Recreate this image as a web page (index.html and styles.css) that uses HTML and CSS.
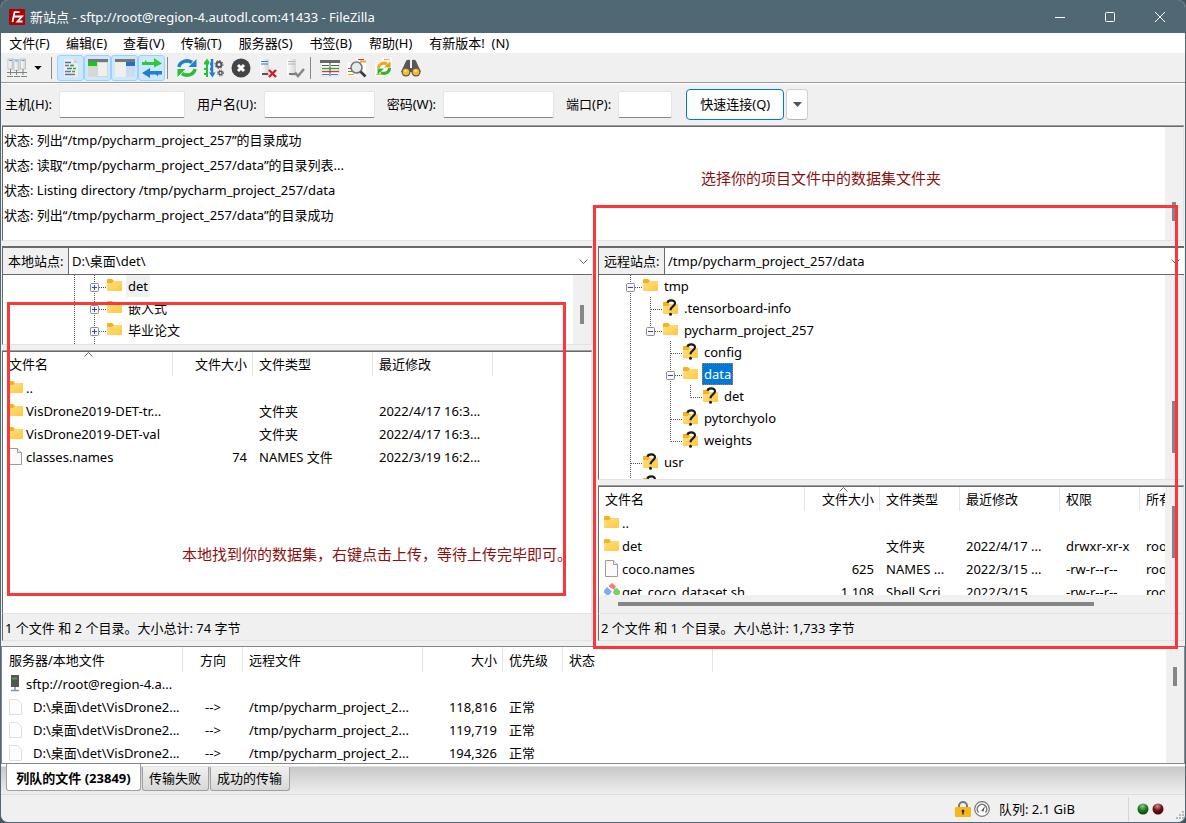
FILE: index.html
```html
<!DOCTYPE html>
<html lang="zh-CN">
<head>
<meta charset="utf-8">
<title>新站点 - FileZilla</title>
<link rel="stylesheet" href="styles.css">
</head>
<body>
<svg class="defs" aria-hidden="true">
  <defs>
    <linearGradient id="gold" x1="0" y1="0" x2="1" y2="1"><stop offset="0" stop-color="#ffe08a"/><stop offset="1" stop-color="#ffc83a"/></linearGradient>
    <radialGradient id="green" cx=".45" cy=".25" r=".8"><stop offset="0" stop-color="#8fc98f"/><stop offset=".5" stop-color="#1d7a1d"/><stop offset="1" stop-color="#003c00"/></radialGradient>
    <radialGradient id="maroon" cx=".45" cy=".25" r=".8"><stop offset="0" stop-color="#c98f8f"/><stop offset=".5" stop-color="#6e1414"/><stop offset="1" stop-color="#3a0000"/></radialGradient>
    <linearGradient id="tower" x1="0" y1="0" x2="1" y2="0"><stop offset="0" stop-color="#fff"/><stop offset="1" stop-color="#d4d4d4"/></linearGradient>
  </defs>
  <symbol id="folder" viewBox="0 0 16 18"><path d="M0 3q0-1 1-1h4l2 2h8v3H0z" fill="#f5b21c"/><path d="M0 6h5l2-2h7q1 0 1 1v8q0 1-1 1H1q-1 0-1-1z" fill="url(#gold)"/></symbol>
  <symbol id="unknown" viewBox="0 0 16 18"><path d="M0 3h5l2 2h8v3H0z" fill="#f5b21c"/><path d="M0 7h5l2-2h8v10H0z" fill="url(#gold)"/><path d="M4.500 3.800C5 1 12 .2 12 4.300c0 3-4.500 3.200-4.500 7" fill="none" stroke="#1c1a14" stroke-width="2.200"/><circle cx="7.500" cy="15.200" r="1.500" fill="#1c1a14"/></symbol>
  <symbol id="page" viewBox="0 0 16 18"><path d="M1.500 .5h8l4 4v12h-12z" fill="#fafafa" stroke="#9c9c9c"/><path d="M9.500 .5v4h4" fill="#eee" stroke="#9c9c9c"/></symbol>
  <symbol id="pale" viewBox="0 0 16 18"><path d="M1.500 1.500h8l4 4v11h-12z" fill="#fdfdfd" stroke="#dedede"/></symbol>
  <symbol id="git" viewBox="0 0 16 18"><path d="M4 3.500L8 0l4 3.500-2 3z" fill="#f77"/><path d="M-1 8.500l4-4.500 5 4.500-4 5z" fill="#79aef5"/><path d="M10 6l3-1 4 4-4 5-4-4z" fill="#7fd05f"/><path d="M4 3l5 6" stroke="#fff"/></symbol>
  <symbol id="server" viewBox="0 0 16 18"><path d="M3 0h8v12H3z" fill="#555"/><path d="M4 2.500h5v2H4z" fill="#3ea43e"/><path d="M7 12v3M3 15.500h8" stroke="#7c9aa8" stroke-width="1.500"/></symbol>
  <symbol id="gv" viewBox="0 0 20 22"><path d="M10.500 0v22" class="dots"/></symbol>
  <symbol id="gt" viewBox="0 0 20 22"><path d="M10.500 0v22M11 12.500h11" class="dots"/></symbol>
  <symbol id="gl" viewBox="0 0 20 22"><path d="M10.500 0v12.500M11 12.500h11" class="dots"/></symbol>
  <symbol id="box" viewBox="0 0 20 22"><rect x="6.500" y="8.500" width="8" height="8" rx="1" fill="#f7f7f7" stroke="#8c8c8c"/><path d="M8 12.500h5" stroke="#2f4b99"/></symbol>
  <symbol id="gm" viewBox="0 0 20 22"><path d="M10.500 0v22M11 12.500h11" class="dots"/><use href="#box"/></symbol>
  <symbol id="gme" viewBox="0 0 20 22"><path d="M10.500 0v12M11 12.500h11" class="dots"/><use href="#box"/></symbol>
  <symbol id="gp" viewBox="0 0 20 22"><path d="M10.500 0v22M11 12.500h11" class="dots"/><use href="#box"/><path d="M10.500 10v5" stroke="#2f4b99"/></symbol>
  <symbol id="tick" viewBox="0 0 9 5"><path d="M.5 4.500l4-4 4 4" fill="none" stroke="#666"/></symbol>
  <symbol id="caret" viewBox="0 0 9 5"><path d="M0 0h9L4.500 5z" fill="currentColor"/></symbol>
</svg>

<div class="window">
  <header class="titlebar">
    <svg class="app-icon" viewBox="0 0 16 16"><rect width="16" height="16" rx="1" fill="#b30000"/><path d="M3.500 13L5.500 3.200H10.500M4.500 7.500h4M8 7.500h5L8.500 12.500h5" fill="none" stroke="#fff" stroke-width="1.800"/></svg>
    <h1 class="title">新站点 - sftp://root@region-4.autodl.com:41433 - FileZilla</h1>
    <button class="win-btn" aria-label="最小化"><svg viewBox="0 0 10 10"><path d="M0 5.500h10"/></svg></button>
    <button class="win-btn" aria-label="最大化"><svg viewBox="0 0 10 10"><rect x=".5" y=".5" width="9" height="9" rx="1"/></svg></button>
    <button class="win-btn" aria-label="关闭"><svg viewBox="0 0 10 10"><path d="M0 0l10 10M10 0L0 10"/></svg></button>
  </header>

  <nav class="menu">
    <button>文件(F)</button><button>编辑(E)</button><button>查看(V)</button><button>传输(T)</button><button>服务器(S)</button><button>书签(B)</button><button>帮助(H)</button><button>有新版本!&nbsp; (N)</button>
  </nav>

  <div class="toolbar">
    <button class="tool" aria-label="站点管理器"><svg viewBox="0 0 20 20"><g fill="url(#tower)" stroke="#a9b3bd" stroke-width=".7"><rect x="1" y="1" width="5" height="10"/><rect x="7" y="1.500" width="5" height="11"/><rect x="13.500" y="1" width="5" height="10"/></g><path d="M2 2.500h3M8 3h3M14.500 2.500h3" stroke="#5b9be0"/><path d="M3.500 11v6M9.500 12v5M16 11v6M0 14.500h20M0 18.500h6M7 18.500h6M14 18.500h6" stroke="#7d837d" fill="none"/></svg></button>
    <button class="tool-drop" aria-label="站点列表"><svg viewBox="0 0 9 5"><use href="#caret"/></svg></button>
    <span class="sep"></span>
    <button class="tool on" aria-label="消息日志"><svg viewBox="0 0 20 20"><path d="M3 1h10l4 4v14H3z" fill="#ededed"/><path d="M13 1v4h4" fill="#cfcfcf"/><path d="M4 4.500h6M6 10.500h5M4 16.500h5" stroke="#3d77c2" stroke-width="1.500"/><path d="M4 7.500h4M10 7.500h3M4 13.500h6M9 16.500h5" stroke="#777" stroke-width="1.500"/><path d="M12 10.500h3M11 13.500h3M9 7.500h3" stroke="#2fae2f" stroke-width="1.500"/></svg></button>
    <button class="tool on" aria-label="本地目录树"><svg viewBox="0 0 20 20"><path d="M0 2h20v17H0z" fill="#d6d6d2"/><path d="M10 5h9v13h-9z" fill="#efefeb"/><path d="M0 1h20v3H0z" fill="#777"/><path d="M0 4h9v4H0z" fill="#18c818"/></svg></button>
    <button class="tool on" aria-label="远程目录树"><svg viewBox="0 0 20 20"><path d="M0 2h20v17H0z" fill="#efefeb"/><path d="M11 5h9v14h-9z" fill="#cddcf0"/><path d="M0 1h20v3H0z" fill="#777"/><path d="M11 4h9v4h-9z" fill="#1d74d0"/></svg></button>
    <button class="tool on" aria-label="传输队列"><svg viewBox="0 0 20 20"><path d="M0 4h3V2l2 2h7V0l8 5.500-8 4V7H0z" fill="#2fcb34"/><path d="M20 13H8v-3l-8 5 8 5v-3.500h6l2 2v-2h4z" fill="#2080d0"/></svg></button>
    <span class="sep"></span>
    <button class="tool" aria-label="刷新"><svg viewBox="0 0 20 20"><path d="M2 9A8 7 0 0 1 15 4.500" fill="none" stroke="#2080d0" stroke-width="3.600"/><path d="M19.500 1v8h-8z" fill="#2080d0"/><path d="M18 11A8 7 0 0 1 5 15.500" fill="none" stroke="#28c23a" stroke-width="3.600"/><path d="M.5 19v-8h8z" fill="#28c23a"/></svg></button>
    <button class="tool" aria-label="处理队列"><svg viewBox="0 0 20 20"><path d="M3 3v16M0 5.500h5M0 11h3M0 16h3" stroke="#28c23a" stroke-width="2"/><path d="M0 5l3-4.500L6 5z" fill="#28c23a"/><path d="M8 1v15M6 6h2M6 11h2" stroke="#2080d0" stroke-width="2.500"/><path d="M5 14.500l3.500 5 3-5z" fill="#2080d0"/><g fill="none" stroke="#555"><circle cx="15" cy="6.500" r="2.500" stroke-width="2"/><circle cx="15" cy="6.500" r="4" stroke-dasharray="1.500 1.600"/><circle cx="16.500" cy="15" r="1.700" stroke-width="1.500"/><circle cx="16.500" cy="15" r="3" stroke-dasharray="1.200 1.200"/></g></svg></button>
    <button class="tool" aria-label="取消"><svg viewBox="0 0 20 20"><circle cx="10" cy="10" r="9.500" fill="#424446"/><path d="M7 7l6 6M13 7l-6 6" stroke="#fff" stroke-width="3"/></svg></button>
    <button class="tool" aria-label="断开连接"><svg viewBox="0 0 20 20"><path d="M2 1h9v17H2z" fill="url(#tower)"/><path d="M3 3.500h7M3 6h7" stroke="#2f7fd4"/><path d="M4 16h6" stroke="#555" stroke-width="2"/><path d="M11 12l7 7M18 12l-7 7" stroke="#c8202c" stroke-width="2.400"/></svg></button>
    <button class="tool" aria-label="重新连接"><svg viewBox="0 0 20 20"><path d="M2 1h9v17H2z" fill="url(#tower)"/><path d="M3 3.500h7M3 6h7" stroke="#b4b4b4"/><path d="M4 16h6" stroke="#777" stroke-width="2"/><path d="M10 14.500l3 3.500 6-7" fill="none" stroke="#858585" stroke-width="2.500"/></svg></button>
    <span class="sep"></span>
    <button class="tool" aria-label="过滤器"><svg viewBox="0 0 20 20"><path d="M1 3h18v15H1z" fill="#fff" stroke="#ddd"/><path d="M0 2h20v3H0z" fill="#686868"/><path d="M2 7.500h7M11 7.500h8" stroke="#555"/><path d="M2 10.500h17" stroke="#28b030" stroke-width="1.500"/><path d="M2 13.500h17" stroke="#d43b3b" stroke-width="1.500"/><path d="M2 16.500h7M11 16.500h7" stroke="#2f7fd4"/><path d="M10 4v14" stroke="#555"/></svg></button>
    <button class="tool" aria-label="目录比较"><svg viewBox="0 0 20 20"><path d="M9 0h10v15H9z" fill="#fff"/><path d="M11 1.500h6" stroke="#d33"/><path d="M13 3.500h6" stroke="#e8a21c" stroke-width="2"/><path d="M0 5h9v13H0z" fill="#fff"/><path d="M1 10.500h4" stroke="#d33"/><path d="M1 13.500h5" stroke="#2faa2f"/><path d="M1 16.500h6" stroke="#e8a21c"/><circle cx="9.500" cy="9.500" r="5.500" fill="#e7eaeb" stroke="#777" stroke-width="1.600"/><path d="M13.500 13.500l5 5" stroke="#3c3c3c" stroke-width="2.600"/></svg></button>
    <button class="tool" aria-label="同步浏览"><svg viewBox="0 0 20 20"><path d="M8 0h10v13H8zM1 5h9v13H1z" fill="#fff"/><path d="M10 1.500h6M12 16.500H2" stroke="#e8b04c"/><path d="M4.500 10A5.500 5 0 0 1 13 6" fill="none" stroke="#f0a818" stroke-width="3"/><path d="M16.500 3v6.500H10z" fill="#e99a10"/><path d="M15.500 10A5.500 5 0 0 1 7 14.500" fill="none" stroke="#35b52f" stroke-width="3"/><path d="M3.500 17v-6.500H10z" fill="#35b52f"/></svg></button>
    <button class="tool" aria-label="查找文件"><svg viewBox="0 0 20 20"><path d="M0 14L5 3q1-2 4-1v8h2V2q3-1 4 1l5 11z" fill="#57585a"/><circle cx="5" cy="14" r="4.500" fill="#57585a"/><circle cx="15" cy="14" r="4.500" fill="#57585a"/><circle cx="5" cy="14" r="3.300" fill="#fdb813"/><circle cx="15" cy="14" r="3.300" fill="#fdb813"/><circle cx="4.500" cy="13" r="1.200" fill="#fff0b0"/><circle cx="14.500" cy="13" r="1.200" fill="#fff0b0"/></svg></button>
  </div>

  <form class="quick" onsubmit="return false">
    <label for="host">主机(H):</label><input id="host" class="w-host" type="text">
    <label for="user">用户名(U):</label><input id="user" class="w-user" type="text">
    <label for="pass">密码(W):</label><input id="pass" class="w-user" type="password">
    <label for="port">端口(P):</label><input id="port" class="w-port" type="text">
    <button class="connect">快速连接(Q)</button>
    <button class="history" aria-label="历史连接"><svg viewBox="0 0 9 5"><use href="#caret"/></svg></button>
  </form>

  <section class="log sunken">
    <div class="log-lines">
      <p>状态: 列出“/tmp/pycharm_project_257”的目录成功</p>
      <p>状态: 读取“/tmp/pycharm_project_257/data”的目录列表...</p>
      <p>状态: Listing directory /tmp/pycharm_project_257/data</p>
      <p>状态: 列出“/tmp/pycharm_project_257/data”的目录成功</p>
    </div>
    <div class="vbar at-log"><i></i></div>
  </section>

  <main class="panes">
    <section class="pane">
      <div class="site"><label for="local">本地站点:</label><select id="local"><option>D:\桌面\det\</option></select><svg class="chev" viewBox="0 0 9 5"><use href="#tick"/></svg></div>
      <div class="tree-wrap local-tree">
        <ul class="tree">
          <li><svg class="g"><use href="#gv"/></svg><svg class="g"><use href="#gp"/></svg><svg class="ic"><use href="#folder"/></svg><span class="grey">det</span></li>
          <li><svg class="g"><use href="#gv"/></svg><svg class="g"><use href="#gp"/></svg><svg class="ic"><use href="#folder"/></svg><span>嵌入式</span></li>
          <li><svg class="g"><use href="#gv"/></svg><svg class="g"><use href="#gp"/></svg><svg class="ic"><use href="#folder"/></svg><span>毕业论文</span></li>
          <li><svg class="g"><use href="#gv"/></svg><svg class="g"><use href="#gv"/></svg></li>
        </ul>
        <div class="vbar at-local"><i></i></div>
      </div>
      <div class="files sunken">
        <div class="clip">
          <table class="local-table">
            <colgroup><col class="c170"><col class="c80"><col class="c120"><col class="c120"></colgroup>
            <thead><tr><th>文件名<svg class="sort"><use href="#tick"/></svg></th><th class="r">文件大小</th><th>文件类型</th><th>最近修改</th></tr></thead>
            <tbody>
              <tr><td class="n"><svg class="fi"><use href="#folder"/></svg>..</td><td></td><td></td><td></td></tr>
              <tr><td class="n"><svg class="fi"><use href="#folder"/></svg>VisDrone2019-DET-tr...</td><td></td><td>文件夹</td><td>2022/4/17 16:3...</td></tr>
              <tr><td class="n"><svg class="fi"><use href="#folder"/></svg>VisDrone2019-DET-val</td><td></td><td>文件夹</td><td>2022/4/17 16:3...</td></tr>
              <tr><td class="n"><svg class="fi"><use href="#page"/></svg>classes.names</td><td class="r">74</td><td>NAMES 文件</td><td>2022/3/19 16:2...</td></tr>
            </tbody>
          </table>
        </div>
      </div>
      <div class="pane-status">1 个文件 和 2 个目录。大小总计: 74 字节</div>
    </section>

    <section class="pane">
      <div class="site"><label for="remote">远程站点:</label><select id="remote"><option>/tmp/pycharm_project_257/data</option></select><svg class="chev" viewBox="0 0 9 5"><use href="#tick"/></svg></div>
      <div class="tree-wrap remote-tree">
        <ul class="tree">
          <li><svg class="g"><use href="#gm"/></svg><svg class="ic"><use href="#folder"/></svg><span>tmp</span></li>
          <li><svg class="g"><use href="#gv"/></svg><svg class="g"><use href="#gt"/></svg><svg class="ic"><use href="#unknown"/></svg><span>.tensorboard-info</span></li>
          <li><svg class="g"><use href="#gv"/></svg><svg class="g"><use href="#gme"/></svg><svg class="ic"><use href="#folder"/></svg><span>pycharm_project_257</span></li>
          <li><svg class="g"><use href="#gv"/></svg><svg class="g"></svg><svg class="g"><use href="#gt"/></svg><svg class="ic"><use href="#unknown"/></svg><span>config</span></li>
          <li><svg class="g"><use href="#gv"/></svg><svg class="g"></svg><svg class="g"><use href="#gm"/></svg><svg class="ic"><use href="#folder"/></svg><span class="picked">data</span></li>
          <li><svg class="g"><use href="#gv"/></svg><svg class="g"></svg><svg class="g"><use href="#gv"/></svg><svg class="g"><use href="#gl"/></svg><svg class="ic"><use href="#unknown"/></svg><span>det</span></li>
          <li><svg class="g"><use href="#gv"/></svg><svg class="g"></svg><svg class="g"><use href="#gt"/></svg><svg class="ic"><use href="#unknown"/></svg><span>pytorchyolo</span></li>
          <li><svg class="g"><use href="#gv"/></svg><svg class="g"></svg><svg class="g"><use href="#gl"/></svg><svg class="ic"><use href="#unknown"/></svg><span>weights</span></li>
          <li><svg class="g"><use href="#gt"/></svg><svg class="ic"><use href="#unknown"/></svg><span>usr</span></li>
          <li><svg class="g"><use href="#gv"/></svg><svg class="ic"><use href="#unknown"/></svg></li>
        </ul>
        <div class="vbar at-remote"><i></i></div>
      </div>
      <div class="files sunken">
        <div class="clip">
          <table class="remote-table">
            <colgroup><col class="c206"><col class="c75"><col class="c80"><col class="c100"><col class="c80"><col class="c80"></colgroup>
            <thead><tr><th>文件名</th><th class="r">文件大小<svg class="sort"><use href="#tick"/></svg></th><th>文件类型</th><th>最近修改</th><th>权限</th><th>所有者</th></tr></thead>
            <tbody>
              <tr><td class="n"><svg class="fi"><use href="#folder"/></svg>..</td><td></td><td></td><td></td><td></td><td></td></tr>
              <tr><td class="n"><svg class="fi"><use href="#folder"/></svg>det</td><td></td><td>文件夹</td><td>2022/4/17 ...</td><td>drwxr-xr-x</td><td>root</td></tr>
              <tr><td class="n"><svg class="fi"><use href="#page"/></svg>coco.names</td><td class="r">625</td><td>NAMES ...</td><td>2022/3/15 ...</td><td>-rw-r--r--</td><td>root</td></tr>
              <tr><td class="n"><svg class="fi"><use href="#git"/></svg>get_coco_dataset.sh</td><td class="r">1,108</td><td>Shell Scri...</td><td>2022/3/15 ...</td><td>-rw-r--r--</td><td>root</td></tr>
            </tbody>
          </table>
        </div>
        <div class="vbar at-files"><i></i></div>
        <div class="hbar"><i></i></div>
      </div>
      <div class="pane-status">2 个文件 和 1 个目录。大小总计: 1,733 字节</div>
    </section>
  </main>

  <section class="queue">
    <div class="clip">
      <table class="queue-table">
        <colgroup><col class="c180"><col class="c60"><col class="c180"><col class="c80"><col class="c60"><col class="c150"></colgroup>
        <thead><tr><th>服务器/本地文件</th><th class="m">方向</th><th>远程文件</th><th class="r">大小</th><th>优先级</th><th>状态</th></tr></thead>
        <tbody>
          <tr><td class="n"><svg class="fi"><use href="#server"/></svg>sftp://root@region-4.a...</td><td></td><td></td><td></td><td></td><td></td></tr>
          <tr><td class="n deep"><svg class="fi"><use href="#pale"/></svg>D:\桌面\det\VisDrone2...</td><td class="m">--&gt;</td><td>/tmp/pycharm_project_2...</td><td class="r">118,816</td><td>正常</td><td></td></tr>
          <tr><td class="n deep"><svg class="fi"><use href="#pale"/></svg>D:\桌面\det\VisDrone2...</td><td class="m">--&gt;</td><td>/tmp/pycharm_project_2...</td><td class="r">119,719</td><td>正常</td><td></td></tr>
          <tr><td class="n deep"><svg class="fi"><use href="#pale"/></svg>D:\桌面\det\VisDrone2...</td><td class="m">--&gt;</td><td>/tmp/pycharm_project_2...</td><td class="r">194,326</td><td>正常</td><td></td></tr>
        </tbody>
      </table>
    </div>
    <div class="vbar at-queue"><i></i></div>
  </section>

  <div class="tabs" role="tablist">
    <button class="tab active" role="tab" aria-selected="true">列队的文件 (23849)</button><button class="tab" role="tab">传输失败</button><button class="tab" role="tab">成功的传输</button>
  </div>

  <footer class="statusbar">
    <svg class="st" viewBox="0 0 16 16"><path d="M4 8V5a4 4 0 0 1 8 0v3" fill="none" stroke="#777" stroke-width="2"/><rect y="6" width="16" height="10" rx="1" fill="#f9b717"/><circle cx="8" cy="10" r="1.500" fill="#333"/><path d="M8 10v3.500" stroke="#333" stroke-width="1.500"/></svg>
    <svg class="st" viewBox="0 0 16 16"><circle cx="8" cy="8" r="7.300" fill="#fff" stroke="#777" stroke-width="1.200"/><path d="M4.500 11.500a4.800 4.800 0 1 1 7 0" fill="none" stroke="#777" stroke-width="1.600"/><path d="M7 10l4-5-1.500 5.500z" fill="#555"/></svg>
    <span class="queue-size">队列: 2.1 GiB</span>
    <div class="lights">
      <svg viewBox="0 0 12 12"><circle cx="6" cy="6" r="5.500" fill="url(#green)"/></svg>
      <svg viewBox="0 0 12 12"><circle cx="6" cy="6" r="5.500" fill="url(#maroon)"/></svg>
    </div>
    <svg class="grip" viewBox="0 0 9 9"><path d="M6 0h2v2H6zM3 3h2v2H3zM6 3h2v2H6zM0 6h2v2H0zM3 6h2v2H3zM6 6h2v2H6z" fill="#b8b8b8"/></svg>
  </footer>

  <div class="mark mark-local"></div>
  <div class="mark mark-remote"></div>
  <p class="note note-local">本地找到你的数据集，右键点击上传，等待上传完毕即可。</p>
  <p class="note note-remote">选择你的项目文件中的数据集文件夹</p>
</div>
</body>
</html>
```

FILE: styles.css
```css
* { box-sizing: border-box; }
body { margin: 0; background: #43545f; font: 13px/20px "Noto Sans", "Noto Sans CJK SC", sans-serif; color: #000; }
button, input, select { font: inherit; color: inherit; margin: 0; padding: 0; border: 0; background: none; border-radius: 0; }
p, h1, ul { margin: 0; padding: 0; list-style: none; }
svg { display: block; flex: none; }
.defs { position: absolute; width: 0; height: 0; }
.dots { fill: none; stroke: #555; stroke-dasharray: 1 1; }

.window { position: relative; display: flex; flex-direction: column; height: 100vh; overflow: hidden; background: #f0f0f0; border: 1px solid #506774; border-top: 0; border-radius: 8px; }

.titlebar { display: flex; align-items: center; height: 33px; padding-left: 8px; background: #506774; color: #fff; flex: none; }
.app-icon { width: 16px; height: 16px; }
.title { flex: 1; padding-left: 5px; font-size: 13px; font-weight: 400; white-space: nowrap; }
.win-btn { display: flex; align-items: center; justify-content: center; width: 50px; height: 33px; }
.win-btn svg { width: 10px; height: 10px; overflow: visible; fill: none; stroke: #fff; }

.menu { display: flex; height: 20px; padding-left: 8px; gap: 16px; background: #fff; flex: none; }
.menu button { min-width: 41px; line-height: 20px; white-space: nowrap; }
.menu button:nth-child(n+4) { padding-right: 1px; }

.toolbar { display: flex; align-items: center; height: 31px; padding: 0 0 1px 2px; border-bottom: 1px solid #fff; box-shadow: inset 0 -1px #999; flex: none; }
.tool { display: flex; align-items: center; justify-content: center; width: 27px; height: 26px; }
.tool svg { width: 20px; height: 20px; }
.tool.on { background: #cce8ff; border: 1px solid #99d1ff; border-radius: 3px; }
.tool-drop { width: 19px; padding-left: 4px; }
.tool-drop svg { width: 8px; height: 4px; }
.history svg { width: 9px; height: 5px; }
.sep { width: 1px; height: 22px; margin: 0 5px 0 2px; background: #888; }

.quick { display: flex; align-items: center; height: 41px; padding: 0 0 1px 4px; flex: none; white-space: nowrap; }
.quick input { height: 27px; margin: 0 12px 0 7px; background: #fff; border: 1px solid #e3e3e3; border-bottom-color: #868686; border-radius: 2px; }
.w-host { width: 126px; }
.w-user { width: 111px; }
.w-port { width: 54px; }
.connect, .history { height: 31px; background: #fdfdfd; border: 1px solid #d0d0d0; border-bottom-color: #b8b8b8; border-radius: 4px; }
.connect { width: 98px; margin-left: 2px; border-color: #0078d4; }
.history { display: flex; align-items: center; justify-content: center; width: 22px; margin-left: 2px; color: #555; }

.sunken { border: 1px solid #696969; border-right-color: #e3e3e3; border-bottom-color: #e3e3e3; box-shadow: 0 -1px #a0a0a0; background: #fff; }
.log { display: flex; height: 115px; margin: 1px 1px 0; flex: none; }
.log-lines { flex: 1; padding: 1px 0 0 1px; line-height: 25px; white-space: nowrap; overflow: hidden; }

.vbar { width: 18px; background: #f0f0f0; flex: none; }
.vbar i { display: block; width: 4px; margin-left: 7px; background: #868686; }
.at-log { padding-top: 75px; }
.at-log i, .at-local i, .at-queue i { height: 19px; }
.at-local { padding-top: 30px; }
.at-remote { padding-top: 126px; }
.at-remote i, .at-files i { height: 52px; }
.at-files { padding-top: 19px; }
.at-queue { padding-top: 20px; }

.panes { display: grid; grid-template-columns: 590px minmax(0, 1fr); gap: 6px; flex: 1; min-height: 0; margin: 5px 1px 0; }
.pane { display: flex; flex-direction: column; min-width: 0; min-height: 0; }
.site { display: flex; align-items: stretch; height: 29px; border: 1px solid #696969; border-width: 2px 0 1px 1px; background: #fff; flex: none; }
.site label { width: 66px; padding-left: 5px; line-height: 26px; background: #f0f0f0; border-right: 1px solid #696969; white-space: nowrap; }
.site select { flex: 1; min-width: 0; padding-left: 3px; appearance: none; }
.chev { width: 9px; height: 5px; margin: 11px 4px 0 0; transform: rotate(180deg); }

.tree-wrap { display: flex; overflow: hidden; flex: none; background: #fff; border: 1px solid #e3e3e3; border-top: 0; border-left-color: #696969; margin-bottom: 6px; }
.local-tree { height: 70px; }
.remote-tree { height: 205px; }
.tree { flex: 1; }
.local-tree .tree { padding-left: 61px; }
.remote-tree .tree { padding-left: 21px; }
.tree li { display: flex; height: 22px; line-height: 22px; }
.g { width: 20px; height: 22px; overflow: visible; }
symbol { overflow: visible; }
.ic { width: 16px; height: 18px; margin: 2px 3px 0 3px; }
.tree span { padding: 0 2px; }
.grey { background: #f0f0f0; }
.picked { background: #0078d7; color: #fff; outline: 1px dotted #d07828; outline-offset: -1px; }

.files { display: grid; grid-template-columns: minmax(0, 1fr) auto; grid-template-rows: minmax(0, 1fr) auto; flex: 1; min-height: 0; }
.clip { overflow: hidden; min-width: 0; }
.hbar { grid-column: 1 / 3; height: 18px; padding: 7px 89px 0 19px; background: #f0f0f0; }
.hbar i { display: block; height: 4px; background: #868686; }

table { table-layout: fixed; border-collapse: collapse; }
.local-table { width: 490px; }
.remote-table { width: 621px; }
.queue-table { width: 710px; }
.c60 { width: 60px; } .c75 { width: 75px; } .c80 { width: 80px; } .c100 { width: 100px; } .c120 { width: 120px; }
.c150 { width: 150px; } .c170 { width: 170px; } .c180 { width: 180px; } .c206 { width: 206px; }
th, td { padding: 0 6px; text-align: left; font-weight: 400; white-space: nowrap; overflow: hidden; }
th { position: relative; height: 24px; box-shadow: inset -1px 0 #e3e3e3; }
.queue-table th { height: 25px; }
td { height: 23px; }
.r { text-align: right; }
.m { text-align: center; }
.n { padding: 0 0 0 5px; }
.fi { display: inline-block; width: 16px; height: 18px; margin-right: 2px; vertical-align: -4px; }
.deep .fi { margin-right: 9px; }
.sort { position: absolute; top: 0; left: calc(50% - 4px); width: 9px; height: 5px; }

.pane-status { height: 27px; padding-left: 2px; line-height: 28px; border-left: 1px solid #696969; border-bottom: 1px solid #e3e3e3; border-right: 1px solid #e3e3e3; flex: none; white-space: nowrap; }

.queue { display: flex; height: 118px; margin-top: 5px; background: #fff; border: 1px solid #828790; flex: none; }
.queue .clip { flex: 1; padding-left: 1px; }

.tabs { display: flex; align-items: flex-start; height: 31px; padding-left: 5px; background: linear-gradient(#fff 0 2px, #c8c8c8 3px, #f0f0f0 31px); border-bottom: 1px solid #dcdcdc; flex: none; }
.tab { height: 24px; margin-top: 3px; padding: 0 7px; line-height: 20px; white-space: nowrap; background: linear-gradient(#f0f0f0, #d8d8d8); border: 1px solid #a0a0a0; border-top: 0; border-radius: 0 0 3px 3px; }
.tab + .tab { margin-left: 1px; padding: 0 7px 2px 6px; }
.tab.active { min-width: 135px; height: 27px; margin-top: 0; padding-top: 1px; background: #fff; font-weight: 700; }

.statusbar { display: flex; align-items: center; height: 27px; flex: none; }
.st { width: 16px; height: 16px; margin-right: 3px; }
.st:first-child { margin-left: auto; }
.queue-size { width: 135px; padding-left: 6px; }
.lights { display: flex; align-items: center; gap: 3px; width: 48px; height: 24px; padding-left: 8px; border-left: 1px solid #d4d4d4; }
.lights svg { width: 12px; height: 12px; }
.grip { width: 9px; height: 9px; align-self: flex-end; margin-bottom: 2px; }

.mark { position: absolute; border: 3px solid #fb3838; pointer-events: none; }
.mark-local { left: 6px; top: 302px; width: 559px; height: 294px; }
.mark-remote { left: 592px; top: 205px; right: 7px; height: 444px; }
.note { position: absolute; font-size: 15px; color: #8b1010; white-space: nowrap; }
.note-local { left: 181px; top: 544px; }
.note-remote { left: 700px; top: 168px; }
```
